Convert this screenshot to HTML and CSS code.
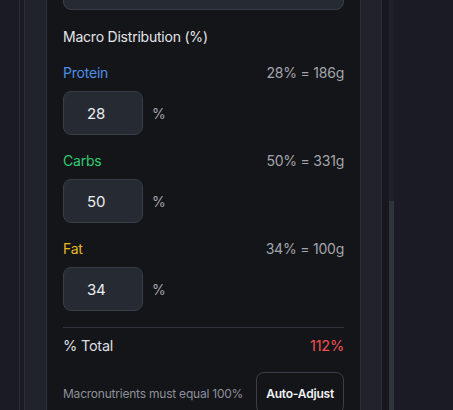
FILE: index.html
```html
<!DOCTYPE html>
<html>
<head>
<meta charset="utf-8">
<link rel="stylesheet" href="styles.css">
</head>
<body>
<div class="shell">
  <div class="strip gap-left"></div>
  <div class="strip line"></div>
  <div class="strip dark4"></div>
  <div class="strip line"></div>
  <div class="strip panel-l"></div>
  <div class="strip line"></div>
  <div class="card">
    <div class="field-top"></div>
    <div class="heading">Macro Distribution (%)</div>

    <div class="macro">
      <div class="macro-head">
        <span class="name protein">Protein</span>
        <span class="calc">28% = 186g</span>
      </div>
      <div class="macro-input">
        <div class="box">28</div>
        <span class="unit">%</span>
      </div>
    </div>

    <div class="macro">
      <div class="macro-head">
        <span class="name carbs">Carbs</span>
        <span class="calc">50% = 331g</span>
      </div>
      <div class="macro-input">
        <div class="box">50</div>
        <span class="unit">%</span>
      </div>
    </div>

    <div class="macro">
      <div class="macro-head">
        <span class="name fat">Fat</span>
        <span class="calc">34% = 100g</span>
      </div>
      <div class="macro-input">
        <div class="box">34</div>
        <span class="unit">%</span>
      </div>
    </div>

    <div class="total">
      <span class="total-label">% Total</span>
      <span class="total-value">112%</span>
    </div>

    <div class="footer">
      <span class="hint">Macronutrients must equal 100%</span>
      <button class="auto">Auto-Adjust</button>
    </div>
  </div>
  <div class="strip line"></div>
  <div class="strip panel-r"></div>
  <div class="strip line"></div>
  <div class="strip dark7"></div>
  <div class="strip scroll"><div class="thumb"></div></div>
</div>
</body>
</html>
```
FILE: styles.css
```css
* { box-sizing: border-box; }
html, body {
  margin: 0;
  height: 100%;
  overflow: hidden;
}
body {
  background: #1b1c23;
  font-family: Inter, "Noto Sans", sans-serif;
  color: #e4e5e9;
  letter-spacing: -0.22px;
}
.shell {
  display: flex;
  height: 410px;
}
.strip { flex: none; height: 100%; }
.gap-left { width: 19px; background: #1b1c23; }
.line { width: 1px; background: #2c2f38; }
.dark4 { width: 4px; background: #1a1b21; }
.panel-l { width: 21px; background: #20232b; }
.panel-r { width: 20px; background: #20232b; }
.dark7 { width: 7px; background: #17181d; }
.scroll {
  width: 5px;
  background: #1f2128;
  display: flex;
  flex-direction: column;
}
.thumb {
  margin-top: 201px;
  flex: 1;
  background: #2f333c;
}
.card {
  flex: none;
  width: 313px;
  height: 100%;
  background: #141519;
  padding: 0 16px;
  overflow: hidden;
}
.field-top {
  height: 44px;
  margin-top: -34px;
  border: 1px solid #393d48;
  background: #262a33;
  border-radius: 8px;
}
.heading {
  margin-top: 17px;
  font-size: 14px;
  line-height: 20px;
  color: #e4e5e9;
}
.macro { margin-top: 16px; }
.macro-head {
  display: flex;
  justify-content: space-between;
  font-size: 14px;
  line-height: 20px;
}
.name.protein { color: #4d8fe6; }
.name.carbs { color: #2fcc71; }
.name.fat { color: #eab522; }
.calc { color: #a3a5ad; }
.macro-input {
  margin-top: 8px;
  display: flex;
  align-items: center;
  gap: 9px;
}
.box {
  width: 80px;
  height: 44px;
  border: 1px solid #393d48;
  background: #262a33;
  border-radius: 8px;
  padding-left: 23px;
  display: flex;
  align-items: center;
  font-size: 15px;
  color: #eceef1;
}
.unit {
  font-size: 14px;
  color: #a3a5ad;
}
.total {
  margin-top: 16px;
  border-top: 1px solid #2e313a;
  padding-top: 8px;
  display: flex;
  justify-content: space-between;
  font-size: 14.5px;
  line-height: 20px;
}
.total-label { color: #dcdee3; }
.total-value { color: #f05252; }
.footer {
  margin-top: 16px;
  display: flex;
  justify-content: space-between;
  align-items: center;
}
.hint {
  font-size: 12px;
  color: #8d9099;
}
.auto {
  font-family: Inter, "Noto Sans", sans-serif;
  font-size: 12px;
  font-weight: 600;
  letter-spacing: -0.2px;
  color: #f1f2f4;
  background: #141519;
  border: 1px solid #3a3e48;
  border-radius: 8px;
  height: 42px;
  padding: 0 9px;
}
```
